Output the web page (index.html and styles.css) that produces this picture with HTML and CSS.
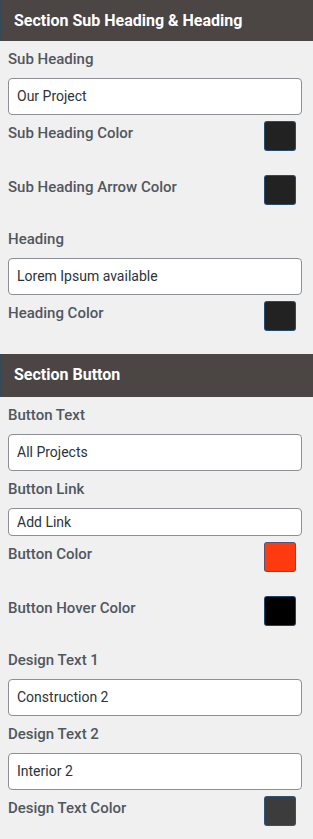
FILE: index.html
```html
<!DOCTYPE html>
<html>
<head>
<meta charset="utf-8">
<link rel="stylesheet" href="styles.css">
</head>
<body>
<div class="panel">
  <div class="section-head">Section Sub Heading &amp; Heading</div>
  <div class="section-body first">
    <div class="field">
      <div class="label">Sub Heading</div>
      <div class="input">Our Project</div>
    </div>
    <div class="color-row">
      <div class="label">Sub Heading Color</div>
      <div class="swatch" style="background:#222222"></div>
    </div>
    <div class="color-row">
      <div class="label">Sub Heading Arrow Color</div>
      <div class="swatch" style="background:#222222"></div>
    </div>
    <div class="field after-color">
      <div class="label">Heading</div>
      <div class="input">Lorem Ipsum available</div>
    </div>
    <div class="color-row">
      <div class="label">Heading Color</div>
      <div class="swatch" style="background:#222222"></div>
    </div>
  </div>
  <div class="section-head second">Section Button</div>
  <div class="section-body">
    <div class="field">
      <div class="label">Button Text</div>
      <div class="input">All Projects</div>
    </div>
    <div class="field">
      <div class="label">Button Link</div>
      <div class="input short">Add Link</div>
    </div>
    <div class="color-row">
      <div class="label">Button Color</div>
      <div class="swatch" style="background:#ff3a0f"></div>
    </div>
    <div class="color-row">
      <div class="label">Button Hover Color</div>
      <div class="swatch" style="background:#000000"></div>
    </div>
    <div class="field after-color">
      <div class="label">Design Text 1</div>
      <div class="input">Construction 2</div>
    </div>
    <div class="field">
      <div class="label">Design Text 2</div>
      <div class="input">Interior 2</div>
    </div>
    <div class="color-row">
      <div class="label">Design Text Color</div>
      <div class="swatch" style="background:#3c3c3c"></div>
    </div>
  </div>
</div>
</body>
</html>
```
FILE: styles.css
```css
html, body {
  margin: 0;
  padding: 0;
  background: #f0f0f0;
}
body {
  font-family: Roboto, "Liberation Sans", sans-serif;
  width: 313px;
  height: 839px;
  overflow: hidden;
}
.panel {
  display: flex;
  flex-direction: column;
}
.section-head {
  height: 41px;
  box-sizing: border-box;
  background: #4b4644;
  border-left: 2px solid #34495a;
  color: #ffffff;
  font-size: 16px;
  font-weight: 700;
  padding-left: 12px;
  line-height: 41px;
}
.section-head.second {
  margin-top: 23px;
  height: 43px;
  line-height: 42px;
}
.section-body {
  display: flex;
  flex-direction: column;
  padding: 0 11px 0 8px;
}
.field {
  display: flex;
  flex-direction: column;
  gap: 9px;
  padding-top: 8px;
}
.field.after-color {
  padding-top: 24px;
}
.label {
  font-size: 15px;
  font-weight: 500;
  color: #50575e;
  line-height: 20px;
}
.input {
  height: 37px;
  box-sizing: border-box;
  background: #ffffff;
  border: 1px solid #8c8f94;
  border-radius: 4px;
  padding: 0 8px;
  font-size: 14px;
  color: #2c3338;
  line-height: 35px;
}
.input.short {
  height: 28px;
  line-height: 26px;
}
.color-row {
  display: flex;
  justify-content: space-between;
  align-items: flex-start;
  padding: 0 6px 0 0;
  margin-top: 6px;
}
.color-row + .color-row {
  margin-top: 24px;
}
.color-row .label {
  padding-top: 2px;
}
.swatch {
  width: 32px;
  height: 30px;
  box-sizing: border-box;
  border: 1px solid rgba(40, 90, 140, 0.75);
  border-radius: 3px;
}
```
